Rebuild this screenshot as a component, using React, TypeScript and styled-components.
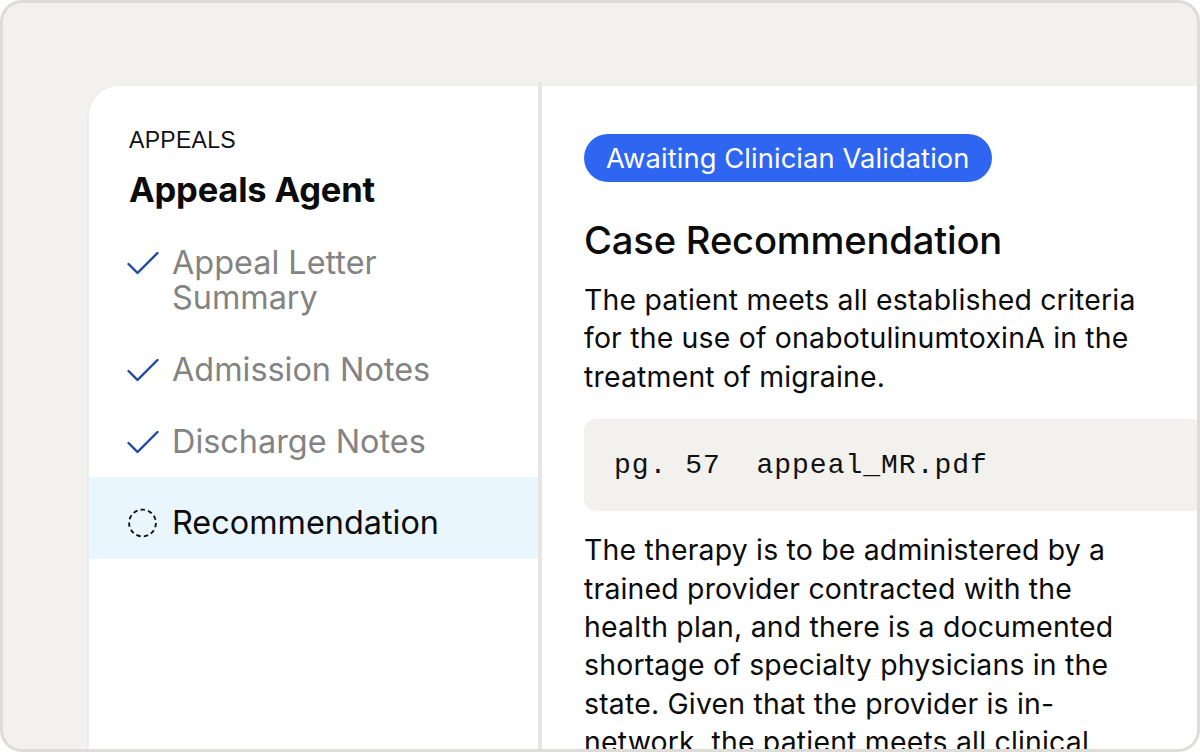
import React from 'react';
import styled, { createGlobalStyle } from 'styled-components';

const GlobalStyle = createGlobalStyle`
  html, body {
    margin: 0;
    padding: 0;
    background: #ffffff;
  }
  body {
    font-family: Inter, "Liberation Sans", Arial, sans-serif;
    -webkit-font-smoothing: antialiased;
  }
`;

type Step = {
  label: string;
  done: boolean;
};

const steps: Step[] = [
  { label: 'Appeal Letter Summary', done: true },
  { label: 'Admission Notes', done: true },
  { label: 'Discharge Notes', done: true },
  { label: 'Recommendation', done: false },
];

// lines kept as in the source layout
const summaryLines = [
  'The patient meets all established criteria',
  'for the use of onabotulinumtoxinA in the',
  'treatment of migraine.',
];

const detailLines = [
  'The therapy is to be administered by a',
  'trained provider contracted with the',
  'health plan, and there is a documented',
  'shortage of specialty physicians in the',
  'state. Given that the provider is in-',
  'network, the patient meets all clinical',
];

const CheckIcon = () => (
  <svg width="32" height="24" viewBox="0 0 32 24" fill="none">
    <path d="M1.5 13 L10.5 22 L30.5 2" stroke="#1f47a6" strokeWidth="2.4" strokeLinecap="round" strokeLinejoin="round" />
  </svg>
);

const PendingIcon = () => (
  <svg width="32" height="32" viewBox="0 0 32 32" fill="none">
    <circle cx="15.5" cy="16" r="13.4" stroke="#111" strokeWidth="1.9" strokeDasharray="4.4 3.2" />
  </svg>
);

const App = () => {
  return (
    <>
      <GlobalStyle />
      <Frame>
        <Panel>
          <Sidebar>
            <Eyebrow>APPEALS</Eyebrow>
            <AgentTitle>Appeals Agent</AgentTitle>
            <StepList>
              {steps.map((step) => (
                <StepRow key={step.label} active={!step.done}>
                  <StepIcon>{step.done ? <CheckIcon /> : <PendingIcon />}</StepIcon>
                  <StepLabel done={step.done}>{step.label}</StepLabel>
                </StepRow>
              ))}
            </StepList>
          </Sidebar>
          <Divider />
          <Content>
            <StatusBadge>Awaiting Clinician Validation</StatusBadge>
            <Heading>Case Recommendation</Heading>
            <Paragraph>
              {summaryLines.map((line) => (
                <Line key={line}>{line}</Line>
              ))}
            </Paragraph>
            <SourceBlock>
              <SourceText>pg. 57&nbsp;&nbsp;appeal_MR.pdf</SourceText>
            </SourceBlock>
            <Paragraph>
              {detailLines.map((line) => (
                <Line key={line}>{line}</Line>
              ))}
            </Paragraph>
          </Content>
        </Panel>
      </Frame>
    </>
  );
};

const Frame = styled.div`
  box-sizing: border-box;
  width: 1200px;
  height: 752px;
  border: 3px solid #dddcd8;
  border-radius: 22px;
  background: #f2f1ee;
  overflow: hidden;
  padding: 81px 0 0 84px;
`;

const Panel = styled.div`
  display: flex;
  height: 720px;
  width: 1160px;
  background: #ffffff;
  border-top: 2px solid #eceef2;
  border-left: 2px solid #eceef2;
  border-top-left-radius: 32px;
`;

const Sidebar = styled.div`
  width: 449px;
  flex-shrink: 0;
  padding-top: 40px;
`;

const Eyebrow = styled.div`
  padding-left: 40px;
  font-family: "Liberation Sans", Arial, sans-serif;
  font-size: 23px;
  line-height: 28px;
  color: #111;
  letter-spacing: 0.3px;
`;

const AgentTitle = styled.div`
  padding-left: 40px;
  margin-top: 15px;
  font-size: 34.5px;
  line-height: 42px;
  font-weight: 700;
  color: #0c0c0c;
  letter-spacing: -0.2px;
`;

const StepList = styled.div`
  margin-top: 15px;
  display: flex;
  flex-direction: column;
`;

const StepRow = styled.div<{ active: boolean }>`
  display: flex;
  align-items: flex-start;
  gap: 13px;
  padding: ${(p) => (p.active ? '28px 40px 19px' : '19px 40px 18px')};
  background: ${(p) => (p.active ? '#e9f6fd' : 'transparent')};
`;

const StepIcon = styled.div`
  width: 32px;
  height: 35px;
  flex-shrink: 0;
  display: flex;
  align-items: center;
  justify-content: flex-start;
  margin-left: -2px;
`;

const StepLabel = styled.div<{ done: boolean }>`
  font-size: 32.4px;
  line-height: 35px;
  color: ${(p) => (p.done ? '#838383' : '#0c0c0c')};
  max-width: 300px;
`;

const Divider = styled.div`
  width: 4px;
  flex-shrink: 0;
  margin-top: -5px;
  background: #e6e6e4;
  border-radius: 2px 2px 0 0;
`;

const Content = styled.div`
  flex: 1;
  padding: 48px 0 0 42px;
  display: flex;
  flex-direction: column;
  align-items: flex-start;
`;

const StatusBadge = styled.div`
  display: inline-flex;
  align-items: center;
  height: 48px;
  padding: 0 22px;
  border-radius: 24px;
  background: #2f66f1;
  color: #ffffff;
  font-size: 27.3px;
  letter-spacing: 0.1px;
`;

const Heading = styled.h2`
  margin: 35px 0 0;
  font-size: 38.2px;
  line-height: 46px;
  font-weight: 500;
  color: #0c0c0c;
  letter-spacing: -0.2px;
`;

const Paragraph = styled.p`
  margin: 18px 0 0;
  font-size: 28.4px;
  line-height: 38.4px;
  letter-spacing: 0.2px;
  color: #0c0c0c;
`;

const Line = styled.span`
  display: block;
  white-space: nowrap;
`;

const SourceBlock = styled.div`
  align-self: stretch;
  margin: 23px 0 20px;
  height: 92px;
  display: flex;
  align-items: center;
  padding-left: 30px;
  border-radius: 12px 0 0 12px;
  background: #f2f1ee;
  & + p {
    margin-top: 0;
  }
`;

const SourceText = styled.span`
  font-family: "Liberation Mono", "Courier New", monospace;
  font-size: 28px;
  letter-spacing: 1px;
  color: #111;
`;

export default App;
